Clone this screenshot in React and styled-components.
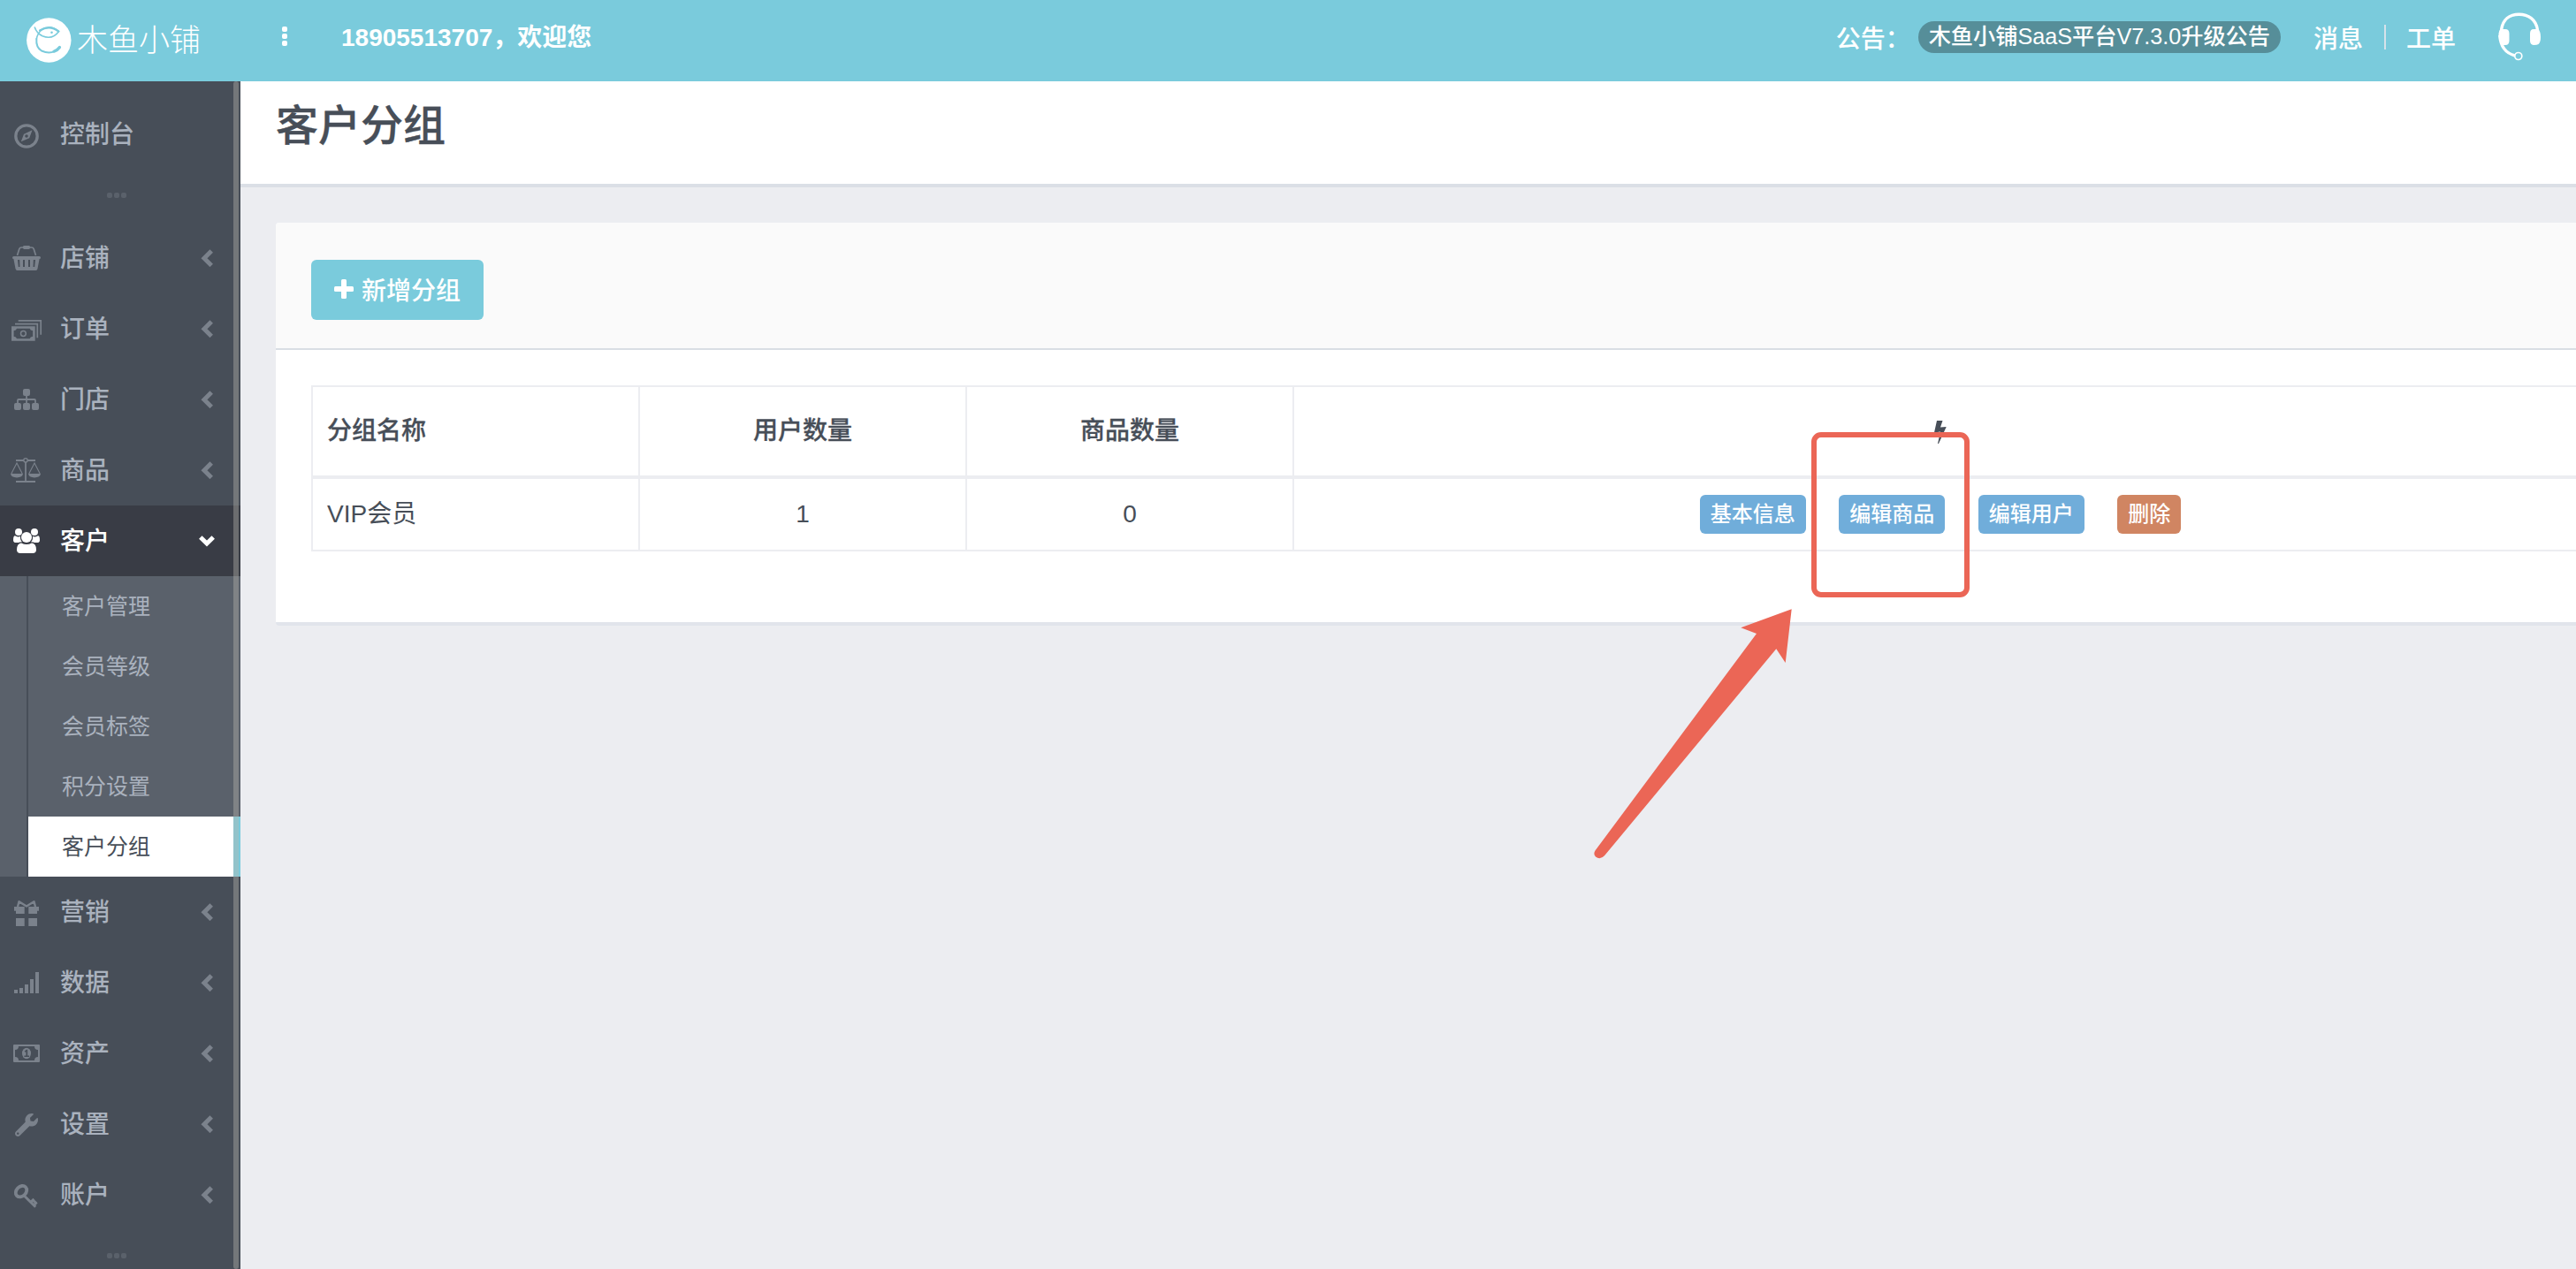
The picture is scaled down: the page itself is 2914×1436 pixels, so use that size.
import styled, {createGlobalStyle} from 'styled-components'
import {FaWrench} from 'react-icons/fa'

const GlobalStyle = createGlobalStyle`
    * {
        box-sizing: border-box;
    }
    body {
        margin: 0;
        overflow: hidden;
        background-color: #ecedf1;
        color: #474e58;
        font-family: "Liberation Sans", "Noto Sans CJK SC", sans-serif;
        font-size: 28px;
    }
`
const Page = styled.div`
    height: 1436px;
    display: flex;
    flex-direction: column;
    overflow: hidden;
`
const Header = styled.header`
    height: 92px;
    flex-shrink: 0;
    display: flex;
    align-items: flex-start;
    background-color: #7acbdc;
    color: white;
    white-space: nowrap;
`
const Brand = styled.div`
    width: 319px;
    padding: 20px 0 0 30px;
    display: flex;
    gap: 6px;
`
const BrandName = styled.span`
    font-size: 35px;
    line-height: 51px;
    font-weight: 300;
`
const Dots = styled.div`
    display: flex;
    flex-direction: ${props => props.$vertical ? 'column' : 'row'};
    gap: 2px;
`
const Dot = styled.i`
    width: 6px;
    height: 6px;
    border-radius: 2px;
    background-color: ${props => props.color};
`
const MenuToggle = styled.div`
    width: 67px;
    padding-top: 30px;
`
const Welcome = styled.div`
    flex: 1;
    line-height: 86px;
    font-weight: bold;
`
const HeaderRight = styled.div`
    height: 84px;
    display: flex;
    align-items: center;
    padding-right: 40px;
    font-weight: 500;
`
const Notice = styled.span`
    height: 36px;
    padding: 0 12px;
    margin: 0 37px 0 9px;
    border-radius: 18px;
    background-color: #568e99;
    font-size: 25.2px;
    line-height: 35px;
`
const Separator = styled.i`
    width: 2px;
    height: 28px;
    margin: 0 23px 0 24px;
    background-color: #d6e2ea;
`
const HeadsetIcon = styled.svg`
    width: 48px;
    height: 56px;
    margin-left: 48px;
`
const Body = styled.div`
    flex: 1;
    min-height: 0;
    display: flex;
`
const Sidebar = styled.nav`
    position: relative;
    width: 272px;
    flex-shrink: 0;
    padding-top: 20px;
    overflow: hidden;
    background-color: #474e58;
`
const ScrollThumb = styled.div`
    position: absolute;
    top: 0;
    bottom: 0;
    right: 2px;
    width: 6px;
    border-radius: 3px;
    background-color: rgba(186, 182, 174, 0.4);
`
const MenuDivider = styled.div`
    height: 60px;
    display: flex;
    justify-content: center;
    padding: 26px 8px 0 0;
`
const MenuItem = styled.div`
    height: 80px;
    display: flex;
    align-items: center;
    padding: 0 29px 0 12px;
    color: ${props => props.$active ? 'white' : '#aab2be'};
    background-color: ${props => props.$active ? '#393c45' : 'transparent'};
`
const MenuIcon = styled.svg`
    width: 36px;
    height: 32px;
    margin-right: 20px;
    color: ${props => props.$active ? 'white' : '#7b828c'};
    fill: currentColor;
`
const MenuLabel = styled.span`
    flex: 1;
    padding-top: 2px;
    font-weight: 500;
    line-height: 78px;
`
const Chevron = styled.svg`
    width: 18px;
    height: 20px;
    margin-right: ${props => props.$active ? '0' : '1px'};
    fill: none;
    stroke: ${props => props.$active ? 'white' : '#7b828c'};
    stroke-width: 5;
`
const SubMenu = styled.ul`
    margin: 0;
    padding: 0 0 0 30px;
    list-style: none;
    background-color: #5a616b;
`
const SubItem = styled.li`
    height: 68px;
    padding-left: 38px;
    border-left: 2px solid #474e58;
    border-right: ${props => props.$current ? '8px solid #7acbdc' : 'none'};
    background-color: ${props => props.$current ? 'white' : 'transparent'};
    color: ${props => props.$current ? '#474e58' : '#aab2be'};
    font-size: 25px;
    line-height: 68px;
`
const Main = styled.main`
    flex: 1;
    min-width: 0;
    overflow: hidden;
`
const TitleBar = styled.div`
    height: 120px;
    padding-left: 40px;
    border-bottom: 4px solid #dbdfe6;
    background-color: white;
`
const Title = styled.h1`
    margin: 0;
    font-size: 48px;
    font-weight: 500;
    line-height: 101px;
    -webkit-text-stroke: 0.4px #474e58;
`
const Panel = styled.section`
    width: 2654px;
    margin: 40px 0 0 40px;
    border-bottom: 4px solid #e1e4eb;
    border-radius: 4px;
    background-color: white;
`
const PanelHead = styled.div`
    height: 144px;
    padding: 42px 40px 0;
    border-bottom: 2px solid #d9dee4;
    border-radius: 4px 4px 0 0;
    background-color: #fafafa;
`
const AddButton = styled.button`
    width: 195px;
    height: 68px;
    padding: 0 0 2px 26px;
    display: flex;
    align-items: center;
    gap: 9px;
    border: none;
    border-radius: 6px;
    background-color: #7acbdc;
    color: white;
    font: inherit;
    font-weight: 500;
`
const PanelBody = styled.div`
    height: 308px;
    padding: 40px;
`
const Table = styled.table`
    width: 2576px;
    table-layout: fixed;
    border-collapse: separate;
    border-spacing: 0;
    border-top: 2px solid #ecedf1;
    border-left: 2px solid #ecedf1;
    line-height: 40px;
`
const Th = styled.th`
    width: ${props => props.$width || 'auto'};
    height: 104px;
    padding: 0 16px;
    border-right: 2px solid #ecedf1;
    border-bottom: 4px solid #ecedf1;
    font-weight: 500;
    -webkit-text-stroke: 0.3px #474e58;
    text-align: ${props => props.$left ? 'left' : 'center'};
`
const Bolt = styled.svg`
    display: block;
    width: 14px;
    height: 26px;
    margin: 2px auto 0;
    fill: #474e58;
`
const Td = styled.td`
    height: 82px;
    padding: 0 16px;
    border-right: 2px solid #ecedf1;
    border-bottom: 2px solid #ecedf1;
    text-align: ${props => props.$left ? 'left' : 'center'};
`
const Actions = styled.div`
    display: flex;
    justify-content: center;
    gap: 37.5px;
`
const Tag = styled.a`
    height: 44px;
    padding: 0 12px;
    border-radius: 6px;
    background-color: ${props => props.$danger ? '#d08562' : '#70adda'};
    color: white;
    font-size: 24px;
    font-weight: 500;
    line-height: 43px;
`
const Highlight = styled.div`
    position: absolute;
    left: 2049px;
    top: 489px;
    width: 179px;
    height: 187px;
    border: 6px solid #eb6656;
    border-radius: 11px;
`
const Arrow = styled.svg`
    position: absolute;
    left: 1800px;
    top: 686px;
    width: 230px;
    height: 288px;
    fill: #eb6656;
`

const icons = {
    compass: <>
        <circle cx="18" cy="18" r="12.2" fill="none" stroke="currentColor" strokeWidth="3.3"/>
        <path fillRule="evenodd" d="M24.5 11.3L21.2 20.2L11.8 24.2L15 15.8ZM18 16.2a1.8 1.8 0 1 0 0 3.6a1.8 1.8 0 1 0 0-3.6Z"/>
    </>,
    basket: <>
        <path d="M7.5 13L9.8 5.8Q10.4 4 12.4 4H23.6Q25.6 4 26.2 5.8L28.5 13" fill="none" stroke="currentColor" strokeWidth="1.7"/>
        <rect x="14" y="2" width="8" height="4" rx="1.4"/>
        <path fillRule="evenodd" d="M3.5 14H32.5Q34 14 34 15.5T32.6 17L30.5 28Q30.2 30 28.5 30H7.5Q5.8 30 5.5 28L3.4 17Q2 17 2 15.5T3.5 14ZM8 18L8.8 26H10.5L10.2 18ZM14 18V26H16V18ZM20 18V26H22V18ZM25.8 18L25.5 26H27.2L28 18Z"/>
    </>,
    cash: <>
        <path d="M8.7 6.8H34.2V22.7M5 10.7H30.3V26.3" fill="none" stroke="currentColor" strokeWidth="1.7"/>
        <path fillRule="evenodd" d="M1 13.3H27.7V29.7H1ZM7 15.7Q6.5 18 3.6 18.3V24.7Q6.5 25 7 27.3H21.7Q22.2 25 25.1 24.7V18.3Q22.2 18 21.7 15.7Z"/>
        <circle cx="14.4" cy="21.5" r="2.9" fill="none" stroke="currentColor" strokeWidth="1.5"/>
    </>,
    sitemap: <>
        <rect x="14" y="4" width="8" height="8" rx="2"/>
        <rect x="4" y="20" width="8" height="8" rx="2"/>
        <rect x="14" y="20" width="8" height="8" rx="2"/>
        <rect x="24" y="20" width="8" height="8" rx="2"/>
        <path d="M18 11V21M8 21V17Q8 16 9 16H27Q28 16 28 17V21" fill="none" stroke="currentColor" strokeWidth="1.8"/>
    </>,
    scales: <>
        <path d="M6 5H28M17 7V29M6 29H28" fill="none" stroke="currentColor" strokeWidth="1.8"/>
        <circle cx="17" cy="4.8" r="2.2" fill="#474e58" stroke="currentColor" strokeWidth="1.4"/>
        <path d="M.8 20L7 8L13.2 20M20.8 20L27 8L33.2 20" fill="none" stroke="currentColor" strokeWidth="1.1"/>
        <path d="M0 20H14Q13.5 24.4 7 24.4T0 20ZM20 20H34Q33.5 24.4 27 24.4T20 20Z"/>
    </>,
    users: <>
        <circle cx="9" cy="6" r="4"/>
        <circle cx="27" cy="6" r="4"/>
        <path d="M5 10.2Q9 12.5 11 10.8Q10.5 15 13 17.3Q10 17.5 9 18H6Q3 18 3 15.2Q3 10.2 5 10.2ZM31 10.2Q27 12.5 25 10.8Q25.5 15 23 17.3Q26 17.5 27 18H30Q33 18 33 15.2Q33 10.2 31 10.2Z"/>
        <circle cx="18" cy="12" r="6"/>
        <path d="M12 18.4Q18 21.5 24 18.4Q29 19 29 26Q29 30 25 30H11Q7 30 7 26Q7 19 12 18.4Z"/>
    </>,
    gift: <>
        <path d="M8 10L9.5 4.2L18 9.5L26.5 4.2L28 10" fill="none" stroke="currentColor" strokeWidth="2.4" strokeLinejoin="round"/>
        <path d="M4 10H15.7V18H6V14.7H4ZM20.3 10H32V14.7H30V18H20.3ZM6 23H15.7V32H6ZM20.3 23H30V32H20.3Z"/>
    </>,
    signal: <path d="M4 24H8V28H4ZM10 22H14V28H10ZM16 18H20V28H16ZM22 12H26V28H22ZM28 4H32V28H28Z"/>,
    money: <>
        <path fillRule="evenodd" d="M4 6H32Q33 6 33 7V25Q33 26 32 26H4Q3 26 3 25V7Q3 6 4 6ZM9 8Q9 12 5 12V20Q9 20 9 24H27Q27 20 31 20V12Q27 12 27 8Z"/>
        <ellipse cx="18" cy="16" rx="5" ry="6.2"/>
        <path d="M15.7 13.4L17.8 11.8H19.2V18.4H21V20H15.4V18.4H17.4V14.2L16.4 14.8Z" fill="#474e58"/>
    </>,
    wrench: <FaWrench x="5" y="4" size={26}/>,
    key: <>
        <path d="M15.5 17.2L28.2 29.8M22.8 24.4L26.5 20.8M26.4 27.6L29.6 24.5M24.6 21.5L29 25.5" fill="none" stroke="currentColor" strokeWidth="3"/>
        <ellipse cx="12" cy="12.2" rx="7" ry="5.4" transform="rotate(-45 12 12.2)" fill="none" stroke="currentColor" strokeWidth="3.8"/>
    </>,
}

const menu = [
    {icon: 'basket', label: '店铺'},
    {icon: 'cash', label: '订单'},
    {icon: 'sitemap', label: '门店'},
    {icon: 'scales', label: '商品'},
    {icon: 'users', label: '客户', children: ['客户管理', '会员等级', '会员标签', '积分设置', '客户分组']},
    {icon: 'gift', label: '营销'},
    {icon: 'signal', label: '数据'},
    {icon: 'money', label: '资产'},
    {icon: 'wrench', label: '设置'},
    {icon: 'key', label: '账户'},
]

const ThreeDots = ({vertical, color}) => (
    <Dots $vertical={vertical}>
        <Dot color={color}/>
        <Dot color={color}/>
        <Dot color={color}/>
    </Dots>
)

const Logo = () => (
    <svg width="51" height="51" viewBox="0 0 51 51">
        <circle cx="25.3" cy="25.5" r="25.2" fill="white"/>
        <g fill="none" stroke="#7acbdc" strokeLinecap="round">
            <path d="M9.3 11Q11.5 17.5 18 20.8Q29.5 25.5 36.5 15.5Q27 7.5 17.5 13.5Q12.5 17.5 11.3 24" strokeWidth="1.6"/>
            <path d="M15 14.5Q26 7.8 36.3 15.5" strokeWidth="2.2"/>
            <path d="M11.3 24Q10.5 33.5 17 37.5Q29.5 43 37.5 33" strokeWidth="2"/>
            <path d="M31 38.2Q35.5 36.5 37.5 33.5" strokeWidth="3.2"/>
        </g>
        <circle cx="28.5" cy="16.7" r="1.3" fill="#7acbdc"/>
    </svg>
)

const MenuRow = ({icon, label, active, plain}) => (
    <MenuItem $active={active}>
        <MenuIcon $active={active} viewBox="0 0 36 32">{icons[icon]}</MenuIcon>
        <MenuLabel>{label}</MenuLabel>
        {!plain && (
            <Chevron $active={active} viewBox="0 0 18 20">
                <path d={active ? 'M1.8 6L9 13L16.2 6' : 'M15.2 2L7 10.2L15.2 18.4'}/>
            </Chevron>
        )}
    </MenuItem>
)

const App = () => {
  return (
    <Page>
        <GlobalStyle/>
        <Header>
            <Brand>
                <Logo/>
                <BrandName>木鱼小铺</BrandName>
            </Brand>
            <MenuToggle><ThreeDots vertical color="white"/></MenuToggle>
            <Welcome>18905513707，欢迎您</Welcome>
            <HeaderRight>
                <span>公告：</span>
                <Notice>木鱼小铺SaaS平台V7.3.0升级公告</Notice>
                <span>消息</span>
                <Separator/>
                <span>工单</span>
                <HeadsetIcon viewBox="0 0 48 56">
                    <path d="M3.5 20C5 8 13 2.2 23.5 2.2S43 8 44.5 20M1.8 26C2.5 38 8 46 19 49" fill="none" stroke="white" strokeWidth="3.4"/>
                    <path d="M2.5 19H8Q12.5 19 12.5 24V32Q12.5 37 8 37H3.5Q0 30 .5 24Q1 20 2.5 19ZM40 19H45.5Q48 22 48 28T45.5 36Q44 37 40 37Q36 36.5 36 32V24Q36 19 40 19Z" fill="white"/>
                    <circle cx="22.8" cy="49.5" r="4" fill="none" stroke="white" strokeWidth="1.7"/>
                </HeadsetIcon>
            </HeaderRight>
        </Header>
        <Body>
            <Sidebar>
                <MenuRow icon="compass" label="控制台" plain/>
                <MenuDivider><ThreeDots color="#5a616b"/></MenuDivider>
                {menu.map(({icon, label, children}) => (
                    <div key={label}>
                        <MenuRow icon={icon} label={label} active={!!children}/>
                        {children && (
                            <SubMenu>
                                {children.map(name => (
                                    <SubItem key={name} $current={name === '客户分组'}>{name}</SubItem>
                                ))}
                            </SubMenu>
                        )}
                    </div>
                ))}
                <MenuDivider><ThreeDots color="#5a616b"/></MenuDivider>
                <ScrollThumb/>
            </Sidebar>
            <Main>
                <TitleBar>
                    <Title>客户分组</Title>
                </TitleBar>
                <Panel>
                    <PanelHead>
                        <AddButton>
                            <svg width="22" height="22" viewBox="0 0 22 22" fill="white">
                                <rect x="8" width="6" height="22" rx="1.5"/>
                                <rect y="8" width="22" height="6" rx="1.5"/>
                            </svg>
                            新增分组
                        </AddButton>
                    </PanelHead>
                    <PanelBody>
                        <Table>
                            <thead>
                                <tr>
                                    <Th $width="370px" $left>分组名称</Th>
                                    <Th $width="370px">用户数量</Th>
                                    <Th $width="370px">商品数量</Th>
                                    <Th>
                                        <Bolt viewBox="0 0 14 26">
                                            <path d="M3 0H9.5L7 7.6L13.7 7L5 26H4L7 12.5L0 13.5Z"/>
                                        </Bolt>
                                    </Th>
                                </tr>
                            </thead>
                            <tbody>
                                <tr>
                                    <Td $left>VIP会员</Td>
                                    <Td>1</Td>
                                    <Td>0</Td>
                                    <Td>
                                        <Actions>
                                            <Tag>基本信息</Tag>
                                            <Tag>编辑商品</Tag>
                                            <Tag>编辑用户</Tag>
                                            <Tag $danger>删除</Tag>
                                        </Actions>
                                    </Td>
                                </tr>
                            </tbody>
                        </Table>
                    </PanelBody>
                </Panel>
            </Main>
        </Body>
        <Highlight/>
        <Arrow viewBox="1800 686 230 288">
            <path d="M2026.7 689.3L1969.3 710.3L1987 717L1804.5 962.5Q1802 966.5 1805 969.5Q1810 973.5 1815 968.3L2009.3 734.3L2019.7 750Z"/>
        </Arrow>
    </Page>
  )
}

export default App
